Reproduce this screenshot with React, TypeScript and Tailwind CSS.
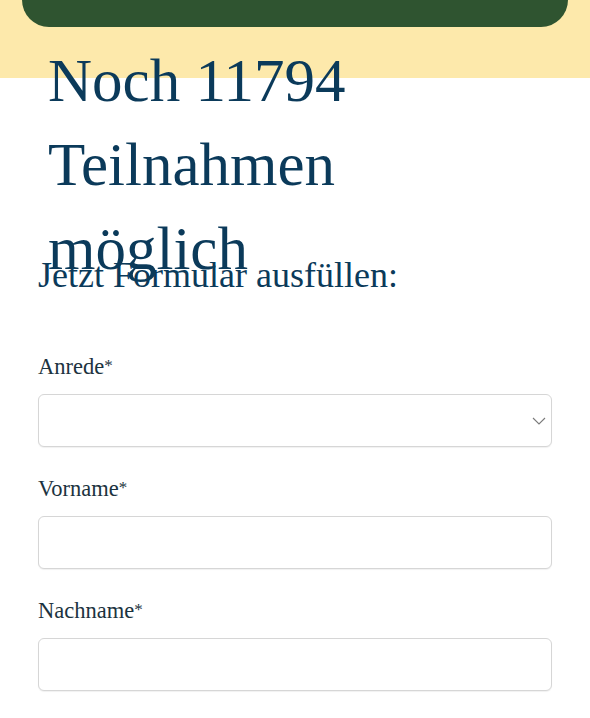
import React from "react";

function Field({ label, select }: { label: string; select?: boolean }) {
  return (
    <div className="flex flex-col">
      <label className="text-[22.5px] leading-[30px] text-[#1c3340] mb-[12px]">
        {label}
        <span className="text-[17px] align-[3px]">*</span>
      </label>
      <div className="relative h-[53px] rounded-[6px] border border-[#d6d6d6] bg-white shadow-[0_1px_1px_rgba(0,0,0,0.06)] mb-[26px]">
        {select && (
          <svg
            className="absolute right-[5px] top-[22px]"
            width="14"
            height="8"
            viewBox="0 0 14 8"
            fill="none"
          >
            <path d="M1 1 L7 7 L13 1" stroke="#7a7a7a" strokeWidth="1.1" />
          </svg>
        )}
      </div>
    </div>
  );
}

export default function App() {
  return (
    <div
      className="w-full min-h-[718px] bg-white overflow-hidden"
      style={{ fontFamily: '"Liberation Serif", "DejaVu Serif", serif' }}
    >
      <div className="h-[78px] bg-[#fde9ab] px-[22px]">
        <div className="h-[27px] bg-[#2f5430] rounded-b-[34px]" />
      </div>
      <div className="px-[38px]">
        <div className="-mt-[39px] h-[215px]">
          <h1 className="ml-[10px] max-w-[440px] text-[61px] leading-[84px] text-[#0b3a5a] font-normal">
            Noch 11794 Teilnahmen möglich
          </h1>
        </div>
        <h2 className="text-[36px] leading-[43px] text-[#0b3a5a] font-normal">
          Jetzt Formular ausfüllen:
        </h2>
        <div className="mt-[54px] flex flex-col">
          <Field label="Anrede" select />
          <Field label="Vorname" />
          <Field label="Nachname" />
        </div>
      </div>
    </div>
  );
}
